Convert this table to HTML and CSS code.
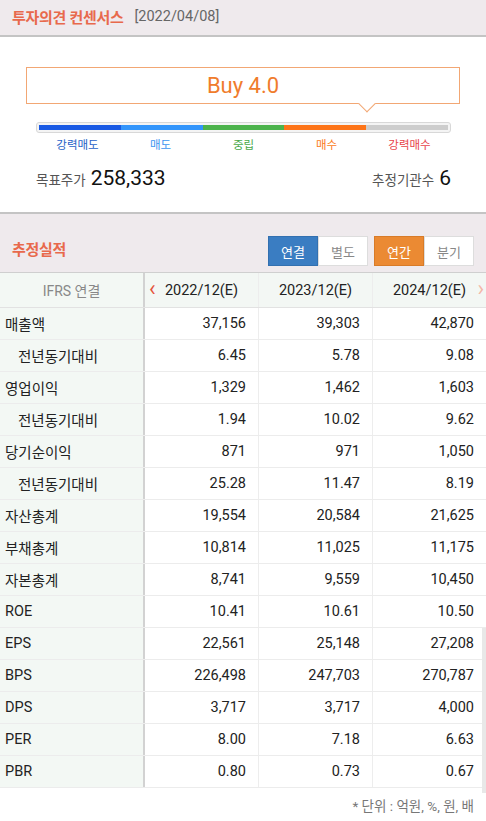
FILE: index.html
```html
<!DOCTYPE html>
<html lang="ko">
<head>
<meta charset="utf-8">
<link rel="stylesheet" href="styles.css">
</head>
<body>
<div class="page">
  <div class="sec-head">
    <span class="sec-title">투자의견 컨센서스</span>
    <span class="sec-date">[2022/04/08]</span>
  </div>
  <div class="opinion">
    <div class="bubble">Buy 4.0<span class="notch"></span></div>
    <div class="bar">
      <span class="seg s1"></span><span class="seg s2"></span><span class="seg s3"></span><span class="seg s4"></span><span class="seg s5"></span>
    </div>
    <div class="labels">
      <span class="l1">강력매도</span><span class="l2">매도</span><span class="l3">중립</span><span class="l4">매수</span><span class="l5">강력매수</span>
    </div>
    <div class="stats">
      <div class="stat"><span class="stat-label">목표주가</span><span class="stat-val">258,333</span></div>
      <div class="stat"><span class="stat-label">추정기관수</span><span class="stat-val">6</span></div>
    </div>
  </div>
  <div class="sec-head2">
    <span class="sec-title">추정실적</span>
    <div class="toggles">
      <div class="tg"><span class="on blue">연결</span><span>별도</span></div>
      <div class="tg"><span class="on orange">연간</span><span>분기</span></div>
    </div>
  </div>
  <div class="tbl">
    <div class="row head">
      <div class="c lab">IFRS 연결</div>
      <div class="c hc"><span class="chev left">‹</span>2022/12(E)</div>
      <div class="c hc">2023/12(E)</div>
      <div class="c hc">2024/12(E)<span class="chev right">›</span></div>
    </div>
    <div class="row"><div class="c lab">매출액</div><div class="c n">37,156</div><div class="c n">39,303</div><div class="c n">42,870</div></div>
    <div class="row"><div class="c lab sub">전년동기대비</div><div class="c n">6.45</div><div class="c n">5.78</div><div class="c n">9.08</div></div>
    <div class="row"><div class="c lab">영업이익</div><div class="c n">1,329</div><div class="c n">1,462</div><div class="c n">1,603</div></div>
    <div class="row"><div class="c lab sub">전년동기대비</div><div class="c n">1.94</div><div class="c n">10.02</div><div class="c n">9.62</div></div>
    <div class="row"><div class="c lab">당기순이익</div><div class="c n">871</div><div class="c n">971</div><div class="c n">1,050</div></div>
    <div class="row"><div class="c lab sub">전년동기대비</div><div class="c n">25.28</div><div class="c n">11.47</div><div class="c n">8.19</div></div>
    <div class="row"><div class="c lab">자산총계</div><div class="c n">19,554</div><div class="c n">20,584</div><div class="c n">21,625</div></div>
    <div class="row"><div class="c lab">부채총계</div><div class="c n">10,814</div><div class="c n">11,025</div><div class="c n">11,175</div></div>
    <div class="row"><div class="c lab">자본총계</div><div class="c n">8,741</div><div class="c n">9,559</div><div class="c n">10,450</div></div>
    <div class="row"><div class="c lab">ROE</div><div class="c n">10.41</div><div class="c n">10.61</div><div class="c n">10.50</div></div>
    <div class="row"><div class="c lab">EPS</div><div class="c n">22,561</div><div class="c n">25,148</div><div class="c n">27,208</div></div>
    <div class="row"><div class="c lab">BPS</div><div class="c n">226,498</div><div class="c n">247,703</div><div class="c n">270,787</div></div>
    <div class="row"><div class="c lab">DPS</div><div class="c n">3,717</div><div class="c n">3,717</div><div class="c n">4,000</div></div>
    <div class="row"><div class="c lab">PER</div><div class="c n">8.00</div><div class="c n">7.18</div><div class="c n">6.63</div></div>
    <div class="row"><div class="c lab">PBR</div><div class="c n">0.80</div><div class="c n">0.73</div><div class="c n">0.67</div></div>
  </div>
  <div class="note">* 단위 : 억원, %, 원, 배</div>
  <div class="scrollbar"></div>
</div>
</body>
</html>
```
FILE: styles.css
```css
* { box-sizing: border-box; }
html, body { margin: 0; padding: 0; background: #fff; }
body {
  font-family: Roboto, "Noto Sans CJK KR", sans-serif;
  color: #222;
  width: 486px;
  overflow: hidden;
}
.page { position: relative; }
.sec-head {
  height: 37px;
  background: #efeaed;
  border-bottom: 2px solid #c4c4c4;
  display: flex;
  align-items: center;
  padding: 0 0 3px 12px;
}
.sec-title {
  color: #e8694c;
  font-weight: bold;
  font-size: 15px;
  letter-spacing: -0.3px;
}
.sec-date {
  color: #666;
  font-size: 14.5px;
  margin-left: 11px;
}
.opinion {
  padding: 30px 26px 0 26px;
  height: 175px;
}
.bubble {
  position: relative;
  height: 37px;
  border: 1px solid #f2a774;
  color: #f07c2c;
  font-size: 22px;
  display: flex;
  align-items: center;
  justify-content: center;
  padding-bottom: 1px;
}
.notch {
  position: absolute;
  left: 334px;
  bottom: -7px;
  width: 12px;
  height: 12px;
  background: #fff;
  border-right: 1px solid #f2a774;
  border-bottom: 1px solid #f2a774;
  transform: rotate(45deg);
}
.bar {
  margin: 18px 9px 0 10px;
  height: 11px;
  border: 1px solid #d8d8d8;
  border-radius: 3px;
  padding: 2px;
  display: flex;
  background: #f4f4f4;
}
.seg { flex: 1; height: 100%; }
.s1 { background: #1a5ae4; }
.s2 { background: #3395fb; }
.s3 { background: #4cb34c; }
.s4 { background: #fd7418; }
.s5 { background: #cdcdcd; }
.labels {
  display: flex;
  margin: 4px 9px 0 10px;
  font-size: 11.5px;
  line-height: 16px;
}
.labels span { flex: 1; text-align: center; }
.l1 { color: #2762c8; }
.l2 { color: #3d96f0; }
.l3 { color: #4aa84a; }
.l4 { color: #fb7a22; }
.l5 { color: #e8444a; }
.stats {
  display: flex;
  justify-content: space-between;
  margin: 13px 9px 0 10px;
  align-items: baseline;
}
.stat { display: flex; align-items: baseline; }
.stat-label { font-size: 13.5px; color: #555; margin-right: 5px; }
.stat-val { font-size: 21px; color: #111; }
.sec-head2 {
  height: 60px;
  background: #efeaed;
  border-top: 2px solid #c4c4c4;
  display: flex;
  align-items: flex-end;
  justify-content: space-between;
  padding: 0 12px 6px 12px;
}
.sec-head2 .sec-title { margin-bottom: 7px; }
.toggles { display: flex; gap: 6px; }
.tg { display: flex; }
.tg span {
  width: 50px;
  height: 30px;
  display: flex;
  align-items: center;
  justify-content: center;
  font-size: 13px;
  color: #888;
  background: #fff;
  border: 1px solid #ddd;
}
.tg span.on { color: #fff; }
.tg span.blue { background: #3a7dc2; border-color: #3270b0; }
.tg span.orange { background: #eb8a33; border-color: #d87b28; }
.tbl { border-top: 1px solid #cfcfcf; }
.row {
  display: grid;
  grid-template-columns: 145px 113px 114px 114px;
  height: 32px;
  border-bottom: 1px solid #ececec;
}
.row.head { height: 35px; background: #f3f7f4; border-bottom: 1px solid #e2e2e2; }
.c {
  display: flex;
  align-items: center;
  font-size: 14.5px;
  border-left: 1px solid #ededed;
}
.c.lab {
  background: #f3f8f4;
  border-left: none;
  border-right: 2px solid #d2d2d2;
  padding-left: 5px;
  color: #222;
}
.c.lab.sub { padding-left: 18px; }
.head .c.lab { justify-content: center; color: #888; font-size: 14px; padding-left: 0; }
.c.n { justify-content: flex-end; padding-right: 12px; }
.c.lab + .c { border-left: none; }
.hc { justify-content: center; position: relative; font-size: 14.5px; }
.chev { position: absolute; font-size: 22px; line-height: 1; top: 5px; }
.chev.left { left: 4px; color: #e5533b; }
.chev.right { right: 2px; color: #f3b7a9; }
.note {
  text-align: right;
  padding: 7px 12px 0 0;
  color: #777;
  font-size: 13.5px;
}
.scrollbar {
  position: absolute;
  right: 0;
  top: 628px;
  width: 4px;
  height: 165px;
  background: #e8e8e8;
}
```
